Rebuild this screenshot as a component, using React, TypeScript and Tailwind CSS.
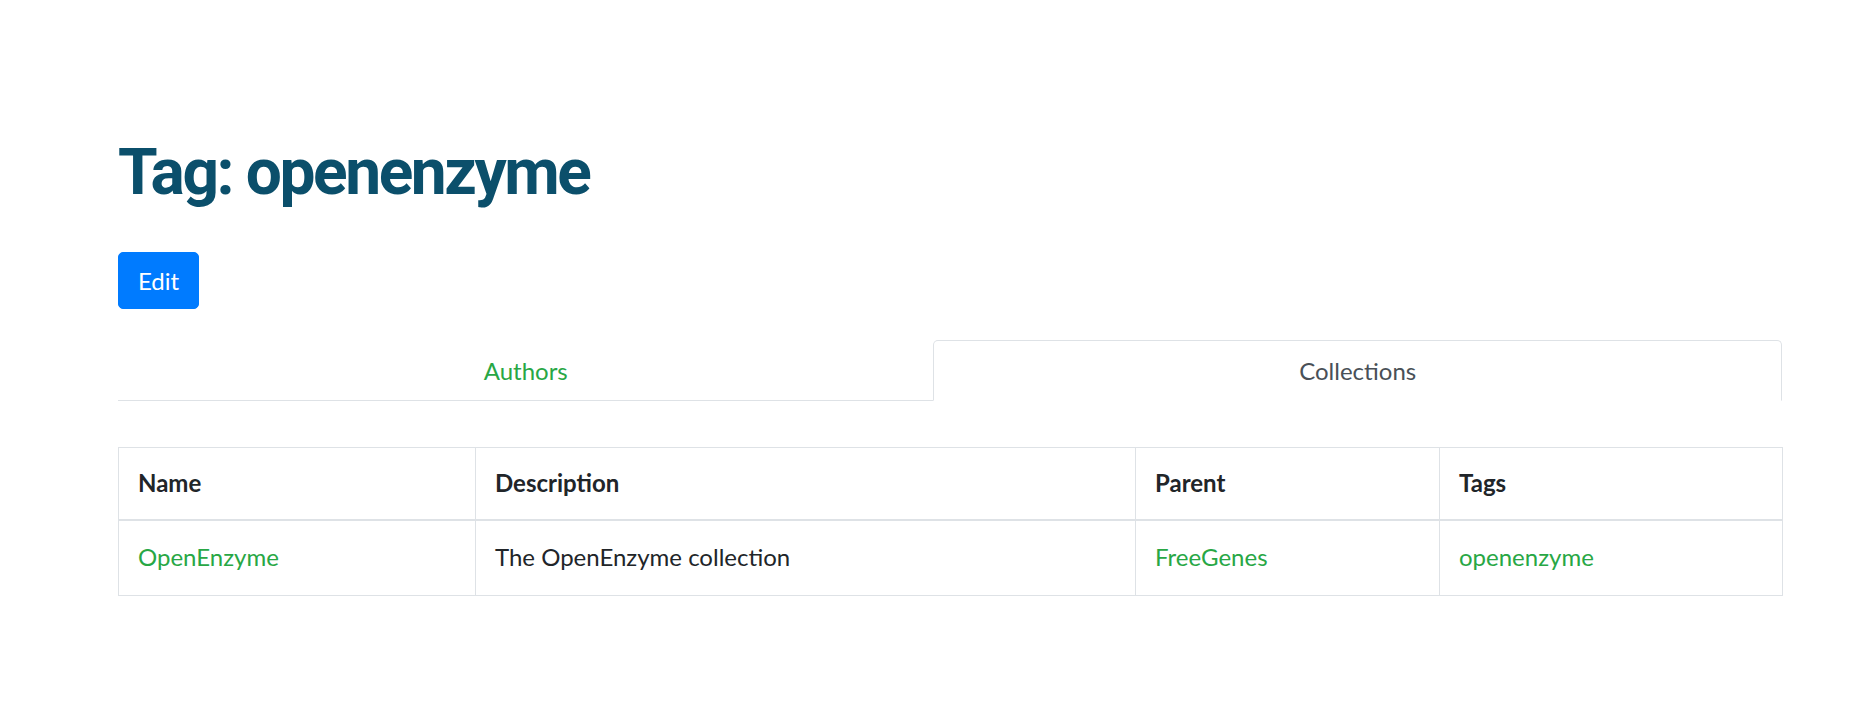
import React from 'react';

const rows = [
  { name: 'OpenEnzyme', description: 'The OpenEnzyme collection', parent: 'FreeGenes', tags: ['openenzyme'] },
];

function Tabs() {
  return (
    <ul className="flex border-b border-[#dee2e6] list-none m-0 p-0">
      <li className="flex-auto text-center">
        <a href="#" className="block -mb-px border border-transparent rounded-t-[5px] py-[11.5px] px-[19px] leading-[36px] text-[24px] text-[#28a745] no-underline">
          Authors
        </a>
      </li>
      <li className="flex-auto text-center">
        <a href="#" className="block -mb-px border border-[#dee2e6] border-b-white bg-white rounded-t-[5px] py-[11.5px] px-[19px] leading-[36px] text-[24px] text-[#495057] no-underline">
          Collections
        </a>
      </li>
    </ul>
  );
}

export default function App() {
  return (
    <div className="min-h-screen bg-white font-['Lato','Liberation_Sans',sans-serif] text-[#212529]">
      <main className="ml-[118px] w-[1664px] pt-[134px]">
        <h1 className="m-0 font-['Roboto','Liberation_Sans',sans-serif] font-bold text-[64px] leading-[77px] tracking-[-2.4px] text-[#0b4f6b]">
          Tag: openenzyme
        </h1>
        <button className="mt-[41px] h-[57px] px-[19px] rounded-[5px] bg-[#007bff] text-white text-[24px] leading-[36px] border border-[#007bff]">
          Edit
        </button>
        <div className="mt-[31px]">
          <Tabs />
        </div>
        <table className="mt-[46px] w-[1664px] table-fixed border-collapse border border-[#dee2e6] text-[24px] leading-[36px]">
          <colgroup>
            <col className="w-[357px]" />
            <col className="w-[660px]" />
            <col className="w-[304px]" />
            <col className="w-[343px]" />
          </colgroup>
          <thead>
            <tr>
              {['Name', 'Description', 'Parent', 'Tags'].map(h => (
                <th key={h} className="text-left font-bold border border-[#dee2e6] border-b-2 pt-[17px] pb-[18px] px-[19px]">
                  {h}
                </th>
              ))}
            </tr>
          </thead>
          <tbody>
            {rows.map(r => (
              <tr key={r.name}>
                <td className="border border-[#dee2e6] pt-[18px] pb-[20px] px-[19px]">
                  <a href="#" className="text-[#28a745] no-underline">{r.name}</a>
                </td>
                <td className="border border-[#dee2e6] pt-[18px] pb-[20px] px-[19px]">{r.description}</td>
                <td className="border border-[#dee2e6] pt-[18px] pb-[20px] px-[19px]">
                  <a href="#" className="text-[#28a745] no-underline">{r.parent}</a>
                </td>
                <td className="border border-[#dee2e6] pt-[18px] pb-[20px] px-[19px]">
                  {r.tags.map(t => (
                    <a key={t} href="#" className="text-[#28a745] no-underline">{t}</a>
                  ))}
                </td>
              </tr>
            ))}
          </tbody>
        </table>
      </main>
    </div>
  );
}
